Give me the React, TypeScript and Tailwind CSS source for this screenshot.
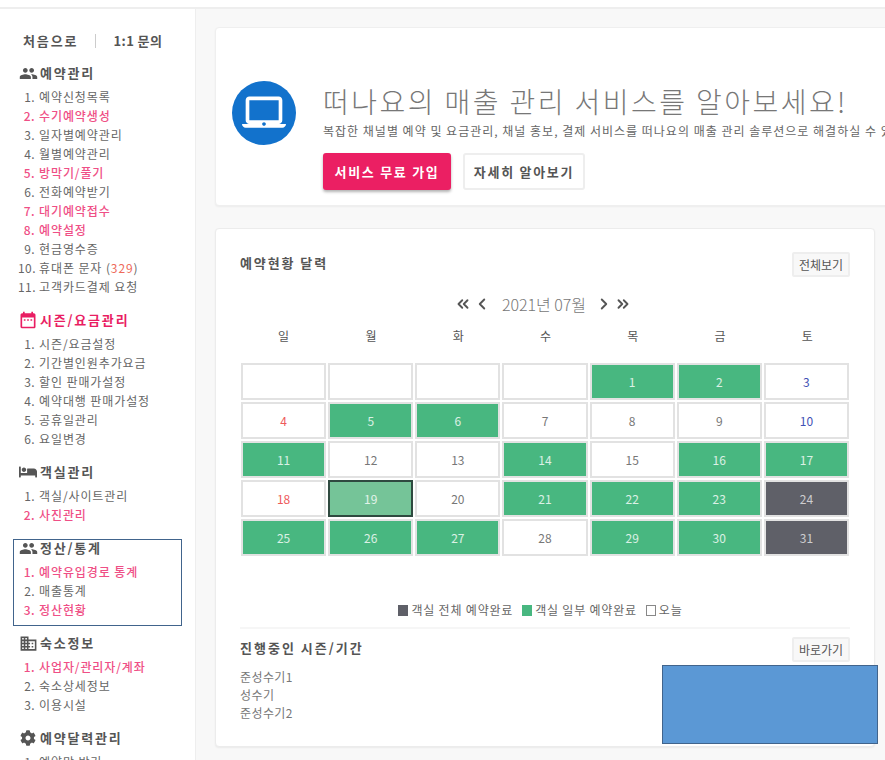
import { ChevronLeft, ChevronRight, ChevronsLeft, ChevronsRight } from 'lucide-react';
import { FaBed, FaCog } from 'react-icons/fa';
import { MdDateRange, MdDomain, MdLaptopMac, MdPeople } from 'react-icons/md';
import type { ReactNode } from 'react';

type MenuItem = { label: ReactNode; on?: boolean };
type MenuSection = { title: string; icon: ReactNode; active?: boolean; items: MenuItem[]; boxed?: boolean };

const SECTIONS: MenuSection[] = [
  {
    title: '예약관리',
    icon: <MdPeople className="h-[19px] w-[19px]" />,
    items: [
      { label: '예약신청목록' },
      { label: '수기예약생성', on: true },
      { label: '일자별예약관리' },
      { label: '월별예약관리' },
      { label: '방막기/풀기', on: true },
      { label: '전화예약받기' },
      { label: '대기예약접수', on: true },
      { label: '예약설정', on: true },
      { label: '현금영수증' },
      { label: <>휴대폰 문자 (<span className="text-[#ee6a5a]">329</span>)</> },
      { label: '고객카드결제 요청' },
    ],
  },
  {
    title: '시즌/요금관리',
    icon: <MdDateRange className="h-[20px] w-[20px]" />,
    active: true,
    items: [
      { label: '시즌/요금설정' },
      { label: '기간별인원추가요금' },
      { label: '할인 판매가설정' },
      { label: '예약대행 판매가설정' },
      { label: '공휴일관리' },
      { label: '요일변경' },
    ],
  },
  {
    title: '객실관리',
    icon: <FaBed className="h-[18px] w-[18px]" />,
    items: [{ label: '객실/사이트관리' }, { label: '사진관리', on: true }],
  },
  {
    title: '정산/통계',
    icon: <MdPeople className="h-[19px] w-[19px]" />,
    boxed: true,
    items: [
      { label: '예약유입경로 통계', on: true },
      { label: '매출통계' },
      { label: '정산현황', on: true },
    ],
  },
  {
    title: '숙소정보',
    icon: <MdDomain className="h-[19px] w-[19px]" />,
    items: [
      { label: '사업자/관리자/계좌', on: true },
      { label: '숙소상세정보' },
      { label: '이용시설' },
    ],
  },
  {
    title: '예약달력관리',
    icon: <FaCog className="h-[16px] w-[16px]" />,
    items: [{ label: '예약막 받기' }],
  },
];

type Cell = { day?: number; kind?: 'full' | 'part' | 'today'; tone?: 'sun' | 'sat' };

const part = (day: number, tone?: Cell['tone']): Cell => ({ day, kind: 'part', tone });
const plain = (day: number, tone?: Cell['tone']): Cell => ({ day, tone });

const CELLS: Cell[] = [
  {}, {}, {}, {}, part(1), part(2), plain(3, 'sat'),
  plain(4, 'sun'), part(5), part(6), plain(7), plain(8), plain(9), plain(10, 'sat'),
  part(11), plain(12), plain(13), part(14), plain(15), part(16), part(17),
  plain(18, 'sun'), { day: 19, kind: 'today' }, plain(20), part(21), part(22), part(23), { day: 24, kind: 'full' },
  part(25), part(26), part(27), plain(28), part(29), part(30), { day: 31, kind: 'full' },
];

const WEEK = ['일', '월', '화', '수', '목', '금', '토'];

function cellClass(c: Cell) {
  if (c.kind === 'part') return 'bg-[#48b780] text-white/80 border-[#e2e2e2]';
  if (c.kind === 'full') return 'bg-[#5f6068] text-white/70 border-[#e2e2e2]';
  if (c.kind === 'today') return 'bg-[#75c498] text-white/80 border-[#2f4a40]';
  if (c.tone === 'sun') return 'bg-white text-[#ee5a5a] border-[#e2e2e2]';
  if (c.tone === 'sat') return 'bg-white text-[#3f51b5] border-[#e2e2e2]';
  return 'bg-white text-[#777] border-[#e2e2e2]';
}

function Sidebar() {
  return (
    <aside className="relative h-full w-[196px] shrink-0 bg-white pl-[18px] text-[12px] border-r border-[#eeeeee]">
      <div className="mt-[22px] flex h-[20px] items-center pl-[5px] text-[13px] font-bold text-[#555]">
        <span className="tracking-[1.9px]">처음으로</span>
        <span className="mr-[17px] ml-[17px] h-[14px] w-px bg-[#ccc]" />
        <span className="tracking-[0.4px]">1:1 문의</span>
      </div>
      <div className="mt-[12px]">
        {SECTIONS.map((s) => (
          <section key={s.title} className="relative pb-[14px]">
            {s.boxed && (
              <div className="absolute left-[-5px] top-[1px] h-[87px] w-[169px] border border-[#41648c]" />
            )}
            <h3
              className={`mb-[4px] flex h-[20px] items-center gap-[2px] text-[13px] font-bold tracking-[1.8px] ${
                s.active ? 'text-[#e91e63]' : 'text-[#555]'
              }`}
            >
              <span className="flex w-[20px] justify-center">{s.icon}</span>
              {s.title}
            </h3>
            <ol>
              {s.items.map((item, i) => (
                <li
                  key={i}
                  className={`flex h-[19px] items-center leading-none tracking-[0.9px] whitespace-nowrap ${
                    item.on ? 'text-[#ef4f86] font-medium' : 'text-[#666]'
                  }`}
                >
                  <span className="w-[17px] text-right tracking-[0.4px]">{i + 1}.</span>
                  <span className="ml-[4px]">{item.label}</span>
                </li>
              ))}
            </ol>
          </section>
        ))}
      </div>
    </aside>
  );
}

function SmallButton({ children }: { children: ReactNode }) {
  return (
    <button
      type="button"
      className="flex h-[25px] w-[58px] items-center justify-center rounded-[2px] border-2 border-[#eeeeee] bg-[#f8f8f8] text-[12px] text-[#555]"
    >
      {children}
    </button>
  );
}

function Promo() {
  return (
    <div className="mt-[18px] ml-[19px] h-[179px] w-[760px] rounded-[4px] border border-[#efefef] bg-white pt-[53px] pl-[16px] shadow-[0_1px_2px_rgba(0,0,0,0.05)]">
      <div className="flex items-start">
        <div className="flex h-[64px] w-[64px] shrink-0 items-center justify-center rounded-full bg-[#1272cc] text-white">
          <MdLaptopMac className="h-[44px] w-[44px]" />
        </div>
        <div className="ml-[27px]">
          <h2 className="h-[40px] text-[28px] leading-[40px] font-light tracking-[2.45px] text-[#777] whitespace-nowrap">
            떠나요의 매출 관리 서비스를 알아보세요!
          </h2>
          <p className="h-[20px] text-[12px] leading-[20px] tracking-[1px] text-[#666] whitespace-nowrap">
            복잡한 채널별 예약 및 요금관리, 채널 홍보, 결제 서비스를 떠나요의 매출 관리 솔루션으로 해결하실 수 있습니다.
          </p>
          <div className="mt-[12px] flex gap-[12px]">
            <button
              type="button"
              className="flex h-[37px] w-[128px] items-center justify-center rounded-[3px] bg-[#eb1f63] text-[13px] font-bold tracking-[1.7px] text-white shadow-[0_2px_3px_rgba(0,0,0,0.3)]"
            >
              서비스 무료 가입
            </button>
            <button
              type="button"
              className="flex h-[37px] w-[122px] items-center justify-center rounded-[3px] border-2 border-[#eeeeee] bg-white text-[13px] font-bold tracking-[1.7px] text-[#555]"
            >
              자세히 알아보기
            </button>
          </div>
        </div>
      </div>
    </div>
  );
}

function Calendar() {
  return (
    <div className="mt-[22px] ml-[19px] h-[519px] w-[660px] rounded-[4px] border border-[#ececec] bg-white px-[24px] pt-[23px] shadow-[0_1px_2px_rgba(0,0,0,0.06)]">
      <div className="flex h-[25px] items-start justify-between">
        <h3 className="text-[13px] leading-[22px] font-bold tracking-[1.9px] text-[#555]">예약현황 달력</h3>
        <SmallButton>전체보기</SmallButton>
      </div>
      <div className="mt-[16px] flex h-[22px] items-center justify-center pr-[4px] text-[#555]">
        <ChevronsLeft className="h-[18px] w-[18px]" strokeWidth={2.5} />
        <ChevronLeft className="ml-[1px] h-[18px] w-[18px]" strokeWidth={2.5} />
        <span className="mr-[9px] ml-[11px] text-[16px] font-light tracking-[-0.05px] text-[#777]">2021년 07월</span>
        <ChevronRight className="h-[18px] w-[18px]" strokeWidth={2.5} />
        <ChevronsRight className="ml-[1px] h-[18px] w-[18px]" strokeWidth={2.5} />
      </div>
      <div className="mt-[10px] grid h-[22px] grid-cols-7 items-center gap-[2px] pl-[1px] text-center text-[12px] text-[#555]">
        {WEEK.map((d) => (
          <span key={d}>{d}</span>
        ))}
      </div>
      <div className="mt-[16px] ml-[1px] grid w-[608px] grid-cols-7 gap-[2px]">
        {CELLS.map((c, i) => (
          <div
            key={i}
            className={`flex h-[37px] items-center justify-center border-2 text-[12px] ${cellClass(c)}`}
          >
            {c.day}
          </div>
        ))}
      </div>
      <div className="mt-[44px] flex h-[20px] items-center justify-center gap-[3px] pr-[9px] text-[12px] tracking-[0.8px] text-[#666]">
        <span className="h-[11px] w-[10px] bg-[#5f6068]" />
        <span className="mr-[6px]">객실 전체 예약완료</span>
        <span className="h-[11px] w-[10px] bg-[#48b780]" />
        <span className="mr-[6px]">객실 일부 예약완료</span>
        <span className="h-[11px] w-[10px] border border-[#888] bg-white" />
        <span>오늘</span>
      </div>
      <div className="mt-[7px] h-[2px] w-[610px] bg-[#f6f6f6]" />
      <div className="mt-[8px] flex items-start justify-between">
        <h3 className="text-[13px] leading-[22px] font-bold tracking-[2px] text-[#555]">진행중인 시즌/기간</h3>
        <SmallButton>바로가기</SmallButton>
      </div>
      <ul className="mt-[6px] text-[12px] leading-[18px] tracking-[0.4px] text-[#777]">
        <li>준성수기1</li>
        <li>성수기</li>
        <li>준성수기2</li>
      </ul>
    </div>
  );
}

export default function App() {
  return (
    <div
      className="relative h-[760px] w-[885px] overflow-hidden bg-white"
      style={{ fontFamily: '"Noto Sans CJK KR", "Noto Sans", sans-serif' }}
    >
      <div className="h-[9px] border-b-2 border-[#eeeeee] bg-white" />
      <div className="flex h-[751px]">
        <Sidebar />
        <main className="min-w-0 flex-1 overflow-hidden bg-[#f8f8f8]">
          <Promo />
          <Calendar />
        </main>
      </div>
      <div className="absolute left-[662px] top-[665px] h-[79px] w-[216px] border border-[#41648c] bg-[#5b98d5]" />
    </div>
  );
}
